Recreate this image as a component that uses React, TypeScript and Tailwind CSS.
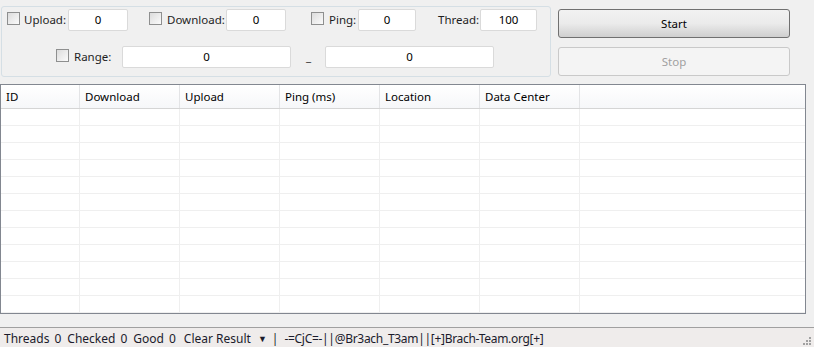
import React from 'react';

const font = { fontFamily: '"Segoe UI", "Noto Sans", Lato, sans-serif' };

const Check = () => (
  <span className="inline-block w-[13px] h-[13px] border border-[#8e8f8f] bg-gradient-to-br from-[#dcdcdc] to-[#fbfbfb] shrink-0" />
);

const Field = ({ value, className }: { value: string; className: string }) => (
  <div className={`h-[22px] bg-white border border-[#dadada] rounded-[2px] flex items-center justify-center text-black ${className}`}>
    {value}
  </div>
);

const columns = ['ID', 'Download', 'Upload', 'Ping (ms)', 'Location', 'Data Center'];

const App = () => {
  const rows = Array.from({ length: 12 });

  return (
    <div className="w-[814px] h-[347px] bg-[#f0f0f0] flex flex-col text-[11.5px] text-[#1e1e1e] overflow-hidden" style={font}>
      <div className="flex h-[84px] pt-[6px]">
        {/* settings group */}
        <div className="ml-[1px] w-[550px] h-[71px] border border-[#d5dfe5] rounded-[3px]">
          <div className="flex items-center h-[22px] mt-[2px]">
            <div className="ml-[5px] mt-[1px]"><Check /></div>
            <span className="ml-[4px] w-[44px]">Upload:</span>
            <Field value="0" className="w-[60px]" />
            <div className="ml-[21px] mt-[1px]"><Check /></div>
            <span className="ml-[5px] w-[59px]">Download:</span>
            <Field value="0" className="w-[60px]" />
            <div className="ml-[25px] mt-[1px]"><Check /></div>
            <span className="ml-[5px] w-[29px]">Ping:</span>
            <Field value="0" className="w-[58px]" />
            <span className="ml-[22px] w-[42px]">Thread:</span>
            <Field value="100" className="w-[57px]" />
          </div>
          <div className="flex items-center h-[22px] mt-[15px]">
            <div className="ml-[54px] mt-[1px]"><Check /></div>
            <span className="ml-[5px] w-[48px]">Range:</span>
            <Field value="0" className="w-[169px]" />
            <span className="ml-[15px] w-[19px] self-end mb-[3px]">_</span>
            <Field value="0" className="w-[169px]" />
          </div>
        </div>
        {/* buttons */}
        <div className="ml-[7px] flex flex-col gap-[9px] pt-[3px]">
          <button className="w-[232px] h-[29px] rounded-[3px] border border-[#707070] bg-gradient-to-b from-[#f2f2f2] via-[#ebebeb] to-[#cfcfcf] text-black">
            Start
          </button>
          <button className="w-[232px] h-[29px] rounded-[3px] border border-[#c9c9c9] bg-[#f4f4f4] text-[#a0a0a0]">
            Stop
          </button>
        </div>
      </div>

      {/* table */}
      <div className="w-[806px] h-[230px] border border-[#828790] bg-white flex flex-col">
        <div className="flex h-[24px] border-b border-[#d5d5d5] bg-gradient-to-b from-white to-[#f6f7f9]">
          {columns.map((c) => (
            <div key={c} className="w-[100px] border-r border-[#e3e4e6] pl-[5px] flex items-center text-black first:w-[79px]">
              {c}
            </div>
          ))}
        </div>
        <div className="flex-1 overflow-hidden">
          {rows.map((_, i) => (
            <div key={i} className="flex h-[17px] border-b border-[#efefef]">
              {columns.map((c) => (
                <div key={c} className="w-[100px] border-r border-[#efefef] first:w-[79px]" />
              ))}
            </div>
          ))}
        </div>
      </div>

      <div className="flex-1" />

      {/* status bar */}
      <div className="h-[20px] border-t border-[#a0a0a0] bg-[#efeceb] flex items-center relative pt-[3px]">
        <div className="ml-[4px] flex items-center gap-[5px] text-[#1b1b2b] text-[12px]">
          <span>Threads</span>
          <span>0</span>
          <span className="ml-[1px]">Checked</span>
          <span>0</span>
          <span className="ml-[1px]">Good</span>
          <span>0</span>
          <span className="ml-[3px]">Clear Result</span>
          <span className="text-[9px] ml-[2px]">▼</span>
          <span>|</span>
          <span className="ml-[1px] tracking-[-0.3px]">-=CjC=-||@Br3ach_T3am||[+]Brach-Team.org[+]</span>
        </div>
        <div className="absolute right-[3px] bottom-[2px] grid grid-cols-3 gap-[1px]">
          {[0, 0, 1, 0, 1, 1, 1, 1, 1].map((v, i) => (
            <span key={i} className={`w-[2px] h-[2px] ${v ? 'bg-[#a0a0a0]' : ''}`} />
          ))}
        </div>
      </div>
    </div>
  );
};

export default App;
